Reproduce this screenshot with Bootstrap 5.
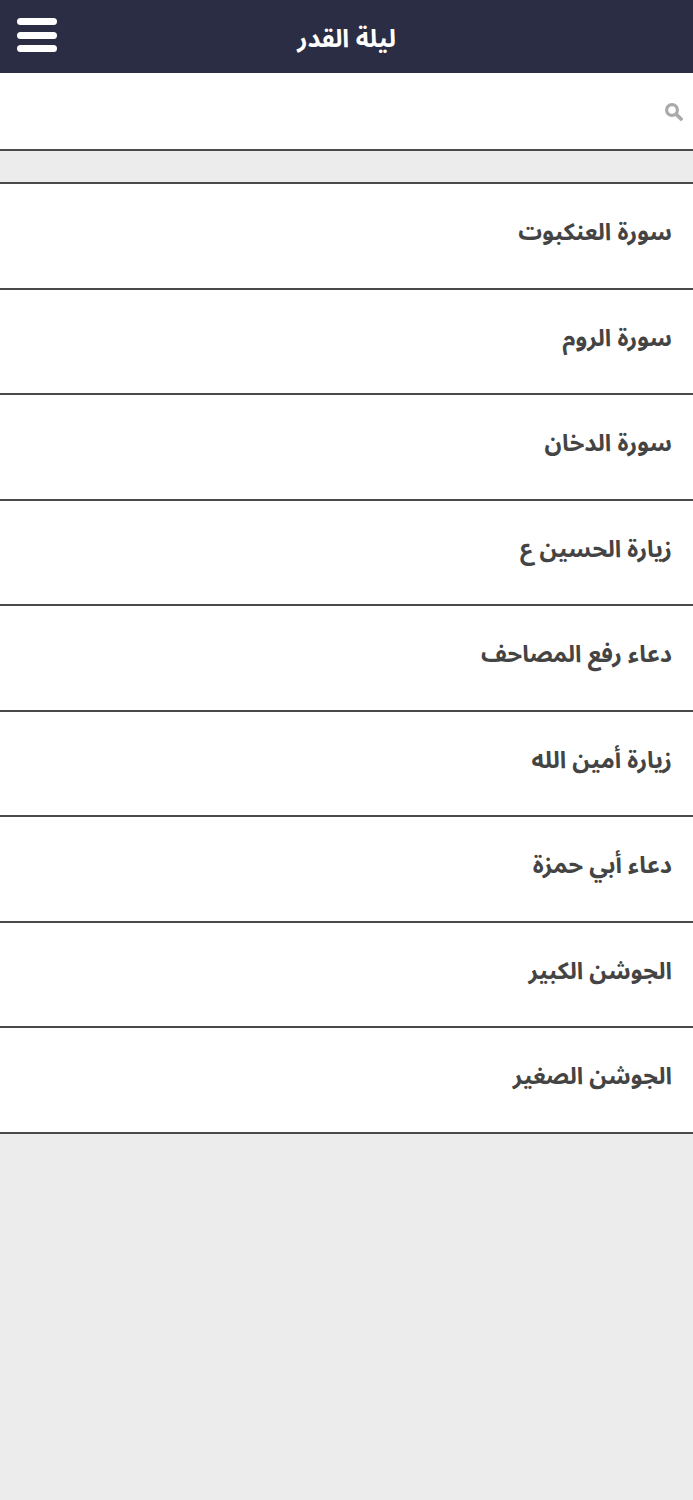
<!DOCTYPE html>
<html lang="ar" dir="rtl"><head><meta charset="utf-8">
<link href="https://cdn.jsdelivr.net/npm/bootstrap@5.3.0/dist/css/bootstrap.min.css" rel="stylesheet">
<style>
body{background:#ececec;font-family:"Noto Sans Arabic","DejaVu Sans",sans-serif;}
.topbar{background:#2a2d43;height:73px;}
.topbar-title{color:#fff;font-size:25px;font-weight:700;line-height:1;padding-top:6px;}
.menu-btn{left:17px;top:18px;width:40px;}
.menu-btn span{display:block;height:7px;border-radius:4px;background:#fff;margin-bottom:6.5px;}
.searchrow{height:78px;background:#fff;border-bottom:2px solid #4a4a4a;padding-right:10px;padding-top:2px;}
.spacer{height:31px;}
.entry{height:105.5px;background:#fff;border-top:2px solid #4a4a4a;color:#444;font-size:23.6px;font-weight:700;line-height:1;padding-right:21px;padding-bottom:5px;}
.entry:last-child{border-bottom:2px solid #4a4a4a;height:107.5px;}
</style></head><body>
<header class="topbar position-relative d-flex align-items-center justify-content-center">
<div class="topbar-title">ليلة القدر</div>
<div class="menu-btn position-absolute"><span></span><span></span><span></span></div>
</header>
<div class="searchrow d-flex align-items-center">
<svg width="18" height="18" viewBox="0 0 18 18"><circle cx="7" cy="7" r="5.4" fill="none" stroke="#aaa" stroke-width="3.2"/><path d="M11.5 11.5L16 16" stroke="#aaa" stroke-width="3.8" stroke-linecap="round"/></svg>
</div>
<div class="spacer"></div>
<div>
<div class="entry d-flex align-items-center">سورة العنكبوت</div>
<div class="entry d-flex align-items-center">سورة الروم</div>
<div class="entry d-flex align-items-center">سورة الدخان</div>
<div class="entry d-flex align-items-center">زيارة الحسين ع</div>
<div class="entry d-flex align-items-center">دعاء رفع المصاحف</div>
<div class="entry d-flex align-items-center">زيارة أمين الله</div>
<div class="entry d-flex align-items-center">دعاء أبي حمزة</div>
<div class="entry d-flex align-items-center">الجوشن الكبير</div>
<div class="entry d-flex align-items-center">الجوشن الصغير</div>
</div>
<script src="https://cdn.jsdelivr.net/npm/bootstrap@5.3.0/dist/js/bootstrap.bundle.min.js"></script>
</body></html>
